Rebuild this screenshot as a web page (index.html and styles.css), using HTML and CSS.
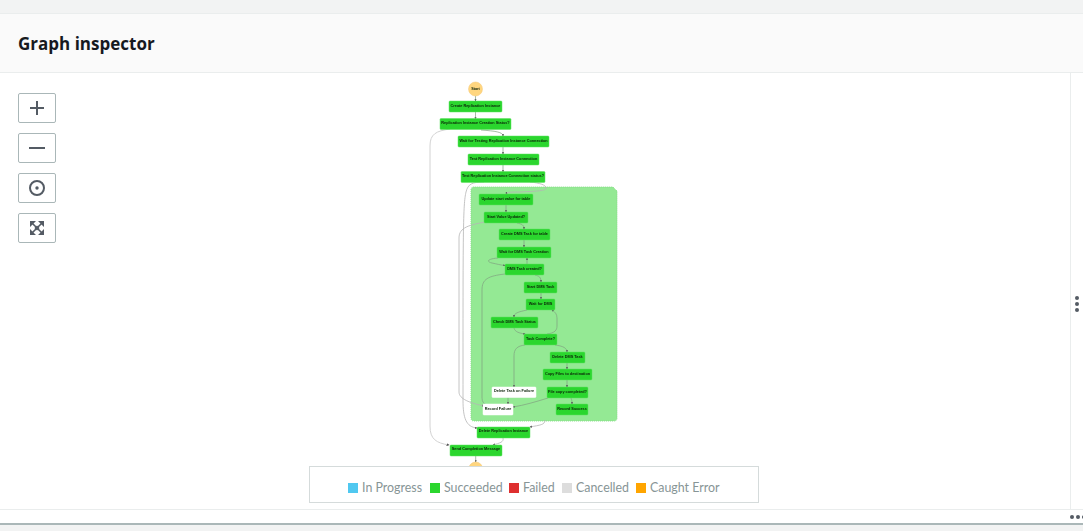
FILE: index.html
```html
<!DOCTYPE html>
<html lang="en">
<head>
  <meta charset="utf-8">
  <title>Graph inspector</title>
  <link rel="stylesheet" href="styles.css">
</head>
<body>
  <div class="top-band"></div>

  <header class="panel-header">
    <h2>Graph inspector</h2>
  </header>

  <main class="inspector">
    <div class="canvas">
      <!-- Zoom controls -->
      <div class="controls">
        <button class="ctl-btn" aria-label="Zoom in">
          <svg width="16" height="16" viewBox="0 0 16 16"><path d="M8 1v14M1 8h14"/></svg>
        </button>
        <button class="ctl-btn" aria-label="Zoom out">
          <svg width="16" height="16" viewBox="0 0 16 16"><path d="M0 8h16"/></svg>
        </button>
        <button class="ctl-btn" aria-label="Center">
          <svg width="16" height="16" viewBox="0 0 16 16"><circle cx="8" cy="8" r="7"/><circle class="fill" cx="8" cy="8" r="1.7"/></svg>
        </button>
        <button class="ctl-btn" aria-label="Fit to view">
          <svg width="14" height="14" viewBox="0 0 14 14"><path class="fill" d="M0 0h6L0 6zM14 0v6L8 0zM0 14V8l6 6zM14 14H8l6-6z"/><path class="thin" d="M2 2l10 10M12 2L2 12"/><path class="fill" d="M7 4.4L9.6 7 7 9.6 4.4 7z"/></svg>
        </button>
      </div>

      <!-- State machine graph -->
      <svg class="graph" width="220" height="393" viewBox="420 73 220 393">
        <defs>
          <marker id="tip" markerWidth="3" markerHeight="3" refX="2.4" refY="1.5" orient="auto">
            <path d="M0 0L3 1.5L0 3z" fill="#555"/>
          </marker>
        </defs>

        <path class="group" d="M471 190q0-3 3-3H613l4 4V418q0 3-3 3H474q-3 0-3-3z"/>

        <g class="edge-outer">
          <path d="M450 129C436 131 430 134 430 146V426C430 439 436 443 449 445"/>
        </g>
        <g class="edge-mid">
          <path d="M484 182C472 182 468 184 466 192C463 205 463 230 463 400C463 418 466 427 477 428"/>
          <path d="M485 222C470 225 459 227 459 238V392C459 399 470 403 484 406"/>
          <path d="M530 182C540 183 546 185 546 188C546 191 538 191 520 192C510 192 507 192 506 194"/>
          <path d="M545 420C545 425 540 425 530 427"/>
          <path d="M503 438C504 442 500 443 493 445"/>
        </g>
        <g class="edge">
          <path d="M475.5 96V101"/>
          <path d="M475.5 112V119"/>
          <path d="M481 130C495 131 503 132 503 136"/>
          <path d="M503 147V154"/>
          <path d="M503 165V172"/>
          <path d="M506 205V212"/>
          <path d="M517 223C522 224 524 225 524 229"/>
          <path d="M524 240V247"/>
          <path d="M498 258C486 259 487 262 492 263C497 264 500 265 505 265.5"/>
          <path d="M527 264V258"/>
          <path d="M535 275C539 276 541 277 541 282"/>
          <path d="M505 274C488 276 482 279 482 290V398C482 402 484 404 487 405"/>
          <path d="M541 293V299"/>
          <path d="M527 310C518 312 514 313 514 317"/>
          <path d="M514 328C515 332 519 333 525 334"/>
          <path d="M547 334C555 333 557 330 557 326V318C557 314 555 312 552 310"/>
          <path d="M555 345C563 346 567 348 567 352"/>
          <path d="M525 345C517 346 514 349 514 356V387"/>
          <path d="M567 363V369"/>
          <path d="M567 380V387"/>
          <path d="M571 398C572 400 572 402 572 404"/>
          <path d="M548 398C535 402 525 405 513 407"/>
          <path d="M508 397V404"/>
          <path d="M475.7 456V462"/>
        </g>

        <circle class="terminal" cx="475.5" cy="89" r="7"/>
        <text class="label" x="475.5" y="90">Start</text>
        <circle class="terminal" cx="475.7" cy="469" r="7"/>

        <rect class="node" x="449" y="101" width="53" height="11" rx="1"/>
        <text class="label" x="475.5" y="106.6">Create Replication Instance</text>
        <rect class="node" x="440" y="118.5" width="71" height="11" rx="1"/>
        <text class="label" x="475.5" y="124">Replication Instance Creation Status?</text>
        <rect class="node" x="458" y="136" width="91" height="11" rx="1"/>
        <text class="label" x="503.5" y="141.6">Wait for Testing Replication Instance Connection</text>
        <rect class="node" x="468" y="154" width="71" height="11" rx="1"/>
        <text class="label" x="503.5" y="159.6">Test Replication Instance Connection</text>
        <rect class="node" x="461" y="171.5" width="84" height="11" rx="1"/>
        <text class="label" x="503" y="177">Test Replication Instance Connection status?</text>

        <rect class="node" x="479" y="194" width="54" height="11" rx="1"/>
        <text class="label" x="506" y="199.6">Update start value for table</text>
        <rect class="node" x="484" y="212" width="44" height="11" rx="1"/>
        <text class="label" x="506" y="217.6">Start Value Updated?</text>
        <rect class="node" x="499" y="229" width="51" height="11" rx="1"/>
        <text class="label" x="524.5" y="234.6">Create DMS Task for table</text>
        <rect class="node" x="497" y="247" width="54" height="11" rx="1"/>
        <text class="label" x="524" y="252.6">Wait for DMS Task Creation</text>
        <rect class="node" x="505" y="264" width="39" height="11" rx="1"/>
        <text class="label" x="524.5" y="269.6">DMS Task created?</text>
        <rect class="node" x="524" y="282" width="33" height="11" rx="1"/>
        <text class="label" x="540.5" y="287.6">Start DMS Task</text>
        <rect class="node" x="526" y="299" width="29" height="11" rx="1"/>
        <text class="label" x="540.5" y="304.6">Wait for DMS</text>
        <rect class="node" x="491" y="317" width="47" height="11" rx="1"/>
        <text class="label" x="514.5" y="322.6">Check DMS Task Status</text>
        <rect class="node" x="524" y="334" width="33" height="11" rx="1"/>
        <text class="label" x="540.5" y="339.6">Task Complete?</text>
        <rect class="node" x="550" y="352" width="35" height="11" rx="1"/>
        <text class="label" x="567.5" y="357.6">Delete DMS Task</text>
        <rect class="node" x="543" y="369" width="49" height="11" rx="1"/>
        <text class="label" x="567.5" y="374.6">Copy Files to destination</text>
        <rect class="node" x="547" y="387" width="41" height="11" rx="1"/>
        <text class="label" x="567.5" y="392.6">File copy completed?</text>
        <rect class="node idle" x="492" y="387" width="44" height="10.5" rx="1"/>
        <text class="label" x="514" y="392.4">Delete Task on Failure</text>
        <rect class="node idle" x="483" y="404" width="30" height="11" rx="1"/>
        <text class="label" x="498" y="409.6">Record Failure</text>
        <rect class="node" x="556" y="404" width="32" height="11" rx="1"/>
        <text class="label" x="572" y="409.6">Record Success</text>

        <rect class="node" x="477" y="427" width="53" height="11" rx="1"/>
        <text class="label" x="503.5" y="432.4">Delete Replication Instance</text>
        <rect class="node" x="450" y="445" width="52" height="11" rx="1"/>
        <text class="label" x="476" y="450.4">Send Completion Message</text>
      </svg>

      <!-- Legend -->
      <ul class="legend">
        <li><span class="swatch in-progress"></span>In Progress</li>
        <li><span class="swatch succeeded"></span>Succeeded</li>
        <li><span class="swatch failed"></span>Failed</li>
        <li><span class="swatch cancelled"></span>Cancelled</li>
        <li><span class="swatch caught"></span>Caught Error</li>
      </ul>
    </div>

    <div class="side-handle"><span class="dot"></span><span class="dot"></span><span class="dot"></span></div>
  </main>

  <footer class="bottom-handle"><span class="dot"></span><span class="dot"></span><span class="dot"></span></footer>
  <div class="bottom-band"></div>
</body>
</html>
```

FILE: styles.css
```css
html, body { margin: 0; height: 531px; overflow: hidden; background-color: white; }
body { display: flex; flex-direction: column; font-family: "Open Sans", "Noto Sans", sans-serif; }

.top-band { height: 13px; background-color: #f2f3f3; border-bottom: 1px solid #eaeded; }

.panel-header { height: 58px; display: flex; align-items: center; padding-left: 18px; background-color: #fafafa; border-bottom: 1px solid #eaeded; }
.panel-header h2 { margin: 0; font-size: 17px; font-weight: 700; color: #16191f; }

.inspector { height: 436px; display: flex; }
.canvas { position: relative; flex: 1; border-right: 1px solid #eaeded; }
.side-handle { box-sizing: border-box; width: 12px; padding-top: 26px; display: flex; flex-direction: column; align-items: center; justify-content: center; gap: 2px; }
.dot { width: 4px; height: 4px; border-radius: 50%; background-color: #545b64; }

.controls { display: flex; flex-direction: column; gap: 10px; padding: 20px 0 0 18px; width: 38px; }
.ctl-btn { box-sizing: border-box; width: 38px; height: 30px; padding: 0; display: flex; align-items: center; justify-content: center; background-color: white; border: 1px solid #aab7b8; border-radius: 2px; }
.ctl-btn svg { fill: none; stroke: #545b64; stroke-width: 2; }
.ctl-btn svg .fill { fill: #545b64; stroke: none; }
.ctl-btn svg .thin { stroke-width: 1.6; }

.graph { position: absolute; left: 420px; top: 0; filter: blur(0.25px); }
.group { fill: #94e994; stroke: #86dc86; stroke-width: 1; stroke-dasharray: 1 1; }
.node { fill: #2bd62e; stroke: #5fe061; stroke-width: 0.5; }
.node.idle { fill: white; stroke: white; }
.terminal { fill: #ffd67f; stroke: #f5c97a; stroke-width: 0.5; }
.label { font-family: "Liberation Sans", sans-serif; font-size: 3.8px; font-weight: 700; fill: #0a2208; text-anchor: middle; }
.edge path, .edge-mid path, .edge-outer path { fill: none; }
.edge path { stroke: #7f9f7f; stroke-width: 0.7; marker-end: url(#tip); }
.edge-mid path { stroke: #b5b5b5; stroke-width: 0.8; marker-end: url(#tip); }
.edge-outer path { stroke: #d2d2d2; stroke-width: 1; marker-end: url(#tip); }

.legend { position: absolute; left: 309px; bottom: 6px; box-sizing: border-box; width: 450px; height: 37px; margin: 0; padding: 12px 0 0 38px; list-style: none; display: grid; grid-template-columns: 82px 79px 53px 74px auto; align-items: start; background-color: white; border: 1px solid #d5dbdb; font-family: Lato, sans-serif; font-size: 12.4px; line-height: 18px; color: #879596; }
.legend li { display: flex; align-items: center; gap: 4px; white-space: nowrap; }
.swatch { width: 10px; height: 10px; }
.in-progress { background-color: #50c8f0; }
.succeeded { background-color: #2bd62e; }
.failed { background-color: #de2f2f; }
.cancelled { background-color: #dddddd; }
.caught { background-color: #ffa500; }

.bottom-handle { height: 13px; display: flex; align-items: center; justify-content: flex-end; gap: 2px; margin-right: -3px; border-top: 1px solid #eaeded; }
.bottom-band { flex: 1; background-color: #f2f3f3; border-top: 2px solid #aab7b8; }
```
